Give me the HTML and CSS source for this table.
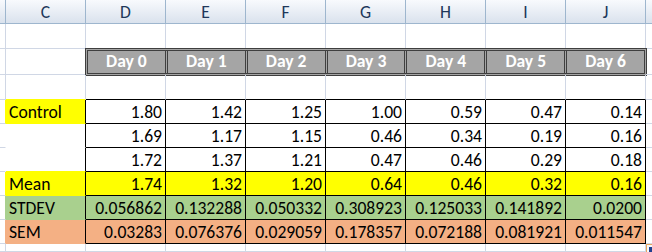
FILE: index.html
```html
<!DOCTYPE html>
<html lang="en">
<head>
    <meta charset="UTF-8">
    <title>Day readings</title>
    <link rel="stylesheet" href="styles.css">
</head>
<body>

<div class="sheet">
    <!-- column headings -->
    <div class="row">
        <div class="col-head"></div>
        <div class="col-head">C</div>
        <div class="col-head">D</div>
        <div class="col-head">E</div>
        <div class="col-head">F</div>
        <div class="col-head">G</div>
        <div class="col-head">H</div>
        <div class="col-head">I</div>
        <div class="col-head">J</div>
        <div class="col-head k"></div>
    </div>

    <div class="row">
        <div class="cell"></div>
        <div class="cell"></div>
        <div class="cell"></div>
        <div class="cell"></div>
        <div class="cell"></div>
        <div class="cell"></div>
        <div class="cell"></div>
        <div class="cell"></div>
        <div class="cell"></div>
        <div class="cell k"></div>
    </div>

    <!-- day headings -->
    <div class="row">
        <div class="cell"></div>
        <div class="cell"></div>
        <div class="days">
            <div class="day">Day 0</div>
            <div class="day">Day 1</div>
            <div class="day">Day 2</div>
            <div class="day">Day 3</div>
            <div class="day">Day 4</div>
            <div class="day">Day 5</div>
            <div class="day">Day 6</div>
        </div>
        <div class="cell k"></div>
    </div>

    <div class="row">
        <div class="cell"></div>
        <div class="cell under-yellow"></div>
        <div class="cell under-table"></div>
        <div class="cell under-table"></div>
        <div class="cell under-table"></div>
        <div class="cell under-table"></div>
        <div class="cell under-table"></div>
        <div class="cell under-table"></div>
        <div class="cell under-table"></div>
        <div class="cell k"></div>
    </div>

    <!-- readings -->
    <div class="row">
        <div class="cell edge-yellow"></div>
        <div class="cell label yellow">Control</div>
        <div class="cell num">1.80</div>
        <div class="cell num">1.42</div>
        <div class="cell num">1.25</div>
        <div class="cell num">1.00</div>
        <div class="cell num">0.59</div>
        <div class="cell num">0.47</div>
        <div class="cell num">0.14</div>
        <div class="cell k"></div>
    </div>

    <div class="row">
        <div class="cell edge-white"></div>
        <div class="cell label white"></div>
        <div class="cell num">1.69</div>
        <div class="cell num">1.17</div>
        <div class="cell num">1.15</div>
        <div class="cell num">0.46</div>
        <div class="cell num">0.34</div>
        <div class="cell num">0.19</div>
        <div class="cell num">0.16</div>
        <div class="cell k"></div>
    </div>

    <div class="row">
        <div class="cell edge-white"></div>
        <div class="cell label white under-yellow"></div>
        <div class="cell num">1.72</div>
        <div class="cell num">1.37</div>
        <div class="cell num">1.21</div>
        <div class="cell num">0.47</div>
        <div class="cell num">0.46</div>
        <div class="cell num">0.29</div>
        <div class="cell num">0.18</div>
        <div class="cell k"></div>
    </div>

    <!-- summary -->
    <div class="row">
        <div class="cell edge-yellow"></div>
        <div class="cell label yellow">Mean</div>
        <div class="cell num yellow">1.74</div>
        <div class="cell num yellow">1.32</div>
        <div class="cell num yellow">1.20</div>
        <div class="cell num yellow">0.64</div>
        <div class="cell num yellow">0.46</div>
        <div class="cell num yellow">0.32</div>
        <div class="cell num yellow">0.16</div>
        <div class="cell k"></div>
    </div>

    <div class="row">
        <div class="cell edge-green"></div>
        <div class="cell label green">STDEV</div>
        <div class="cell num green">0.056862</div>
        <div class="cell num green">0.132288</div>
        <div class="cell num green">0.050332</div>
        <div class="cell num green">0.308923</div>
        <div class="cell num green">0.125033</div>
        <div class="cell num green">0.141892</div>
        <div class="cell num green">0.0200</div>
        <div class="cell k"></div>
    </div>

    <div class="row">
        <div class="cell edge-salmon"></div>
        <div class="cell label salmon">SEM</div>
        <div class="cell num salmon">0.03283</div>
        <div class="cell num salmon">0.076376</div>
        <div class="cell num salmon">0.029059</div>
        <div class="cell num salmon">0.178357</div>
        <div class="cell num salmon">0.072188</div>
        <div class="cell num salmon">0.081921</div>
        <div class="cell num salmon">0.011547</div>
        <div class="cell k"></div>
    </div>

    <div class="row">
        <div class="cell"></div>
        <div class="cell"></div>
        <div class="cell"></div>
        <div class="cell"></div>
        <div class="cell"></div>
        <div class="cell"></div>
        <div class="cell"></div>
        <div class="cell"></div>
        <div class="cell"></div>
        <div class="cell k"></div>
    </div>

    <div class="fill-tag"><span></span></div>
</div>

</body>
</html>
```

FILE: styles.css
```css
* {
    margin: 0;
    padding: 0;
    box-sizing: border-box;
}

body {
    background: #fff;
    color: #000;
    font-family: Carlito, Lato, "Open Sans", sans-serif;
    font-size: 17.6px;
    line-height: 1;
    overflow: hidden;
}

.sheet {
    position: relative;
    display: grid;
    grid-template-columns: 6px repeat(8, 80px) 6px;
    grid-template-rows: 24px 25px 26px 25px repeat(6, 24px) 8px;
    width: 652px;
    height: 252px;
}

.row {
    display: contents;
}

/* Column headings */
.col-head {
    display: flex;
    justify-content: center;
    align-items: flex-end;
    padding-bottom: 1px;
    color: #20375a;
    background: linear-gradient(#f8fafd, #dae2ed);
    border-right: 1px solid #9eb6ce;
    border-bottom: 1px solid #9eb6ce;
}

/* Plain cells with gridlines */
.cell {
    border-right: 1px solid #d0d7e5;
    border-bottom: 1px solid #d0d7e5;
}

.k {
    border-right: none;
}

.under-table {
    border-bottom-color: #000;
}

.under-yellow {
    border-bottom-color: #ffff00;
}

.edge-yellow { border-right-color: #ffff00; }
.edge-green { border-right-color: #a9d08e; }
.edge-salmon { border-right-color: #f4b084; }
.edge-white { border-right-color: #fff; }

.label {
    display: flex;
    align-items: flex-end;
    padding: 0 0 1px 3px;
    border-right-color: #000;
}

.num {
    display: flex;
    justify-content: flex-end;
    align-items: flex-end;
    padding: 0 3px 1px 0;
    border-right-color: #000;
    border-bottom-color: #000;
}

.yellow { background: #ffff00; }
.green { background: #a9d08e; }
.salmon { background: #f4b084; }

.label.white { border-bottom-color: #fff; }
.label.white.under-yellow { border-bottom-color: #ffff00; }
.label.yellow { border-bottom-color: #ffff00; }
.label.green { border-bottom-color: #a9d08e; }
.label.salmon { border-bottom-color: #f4b084; }

/* Day headings (check cell style) */
.days {
    grid-column: 3 / span 7;
    margin: -1px;
    display: flex;
    background: #a5a5a5;
    border: 3px double #3f3f3f;
}

.day {
    flex: 1;
    display: flex;
    justify-content: center;
    align-items: center;
    color: #fff;
    font-weight: 700;
}

.day + .day {
    border-left: 3px double #3f3f3f;
}

/* Auto fill handle peeking in the corner */
.fill-tag {
    position: absolute;
    left: 646px;
    top: 244px;
    width: 12px;
    height: 12px;
    border: 1px solid #e9a55c;
    background: #f6f8fb;
    padding: 2px;
}

.fill-tag span {
    display: block;
    width: 4px;
    height: 5px;
    background: #1f3f8f;
}
```
